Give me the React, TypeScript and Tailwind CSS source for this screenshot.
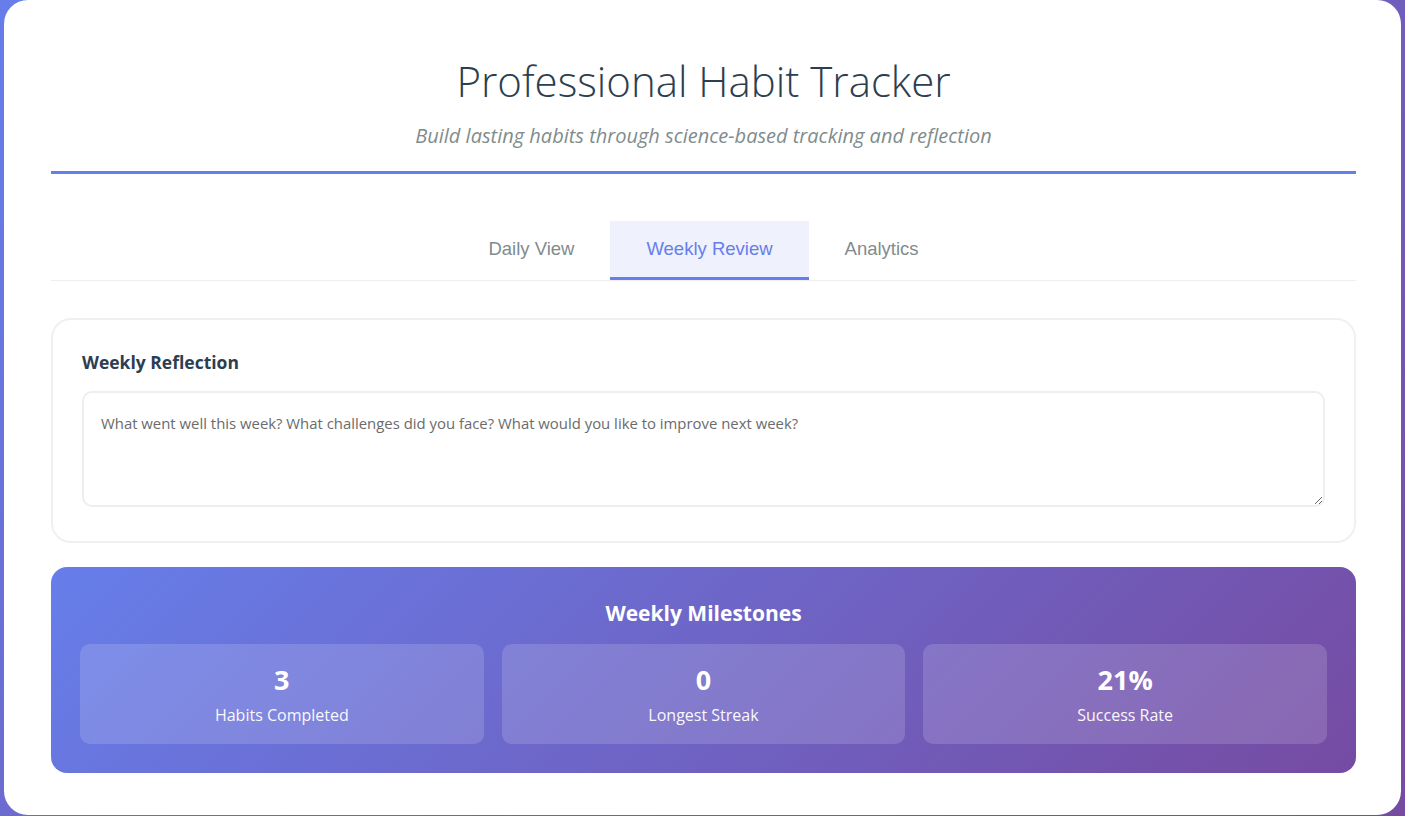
import React from "react";

const seg = { fontFamily: '"Open Sans", "Noto Sans", sans-serif' };

export default function App() {
  const stats = [
    { v: "3", l: "Habits Completed" },
    { v: "0", l: "Longest Streak" },
    { v: "21%", l: "Success Rate" },
  ];
  return (
    <div className="h-[816px] w-full overflow-hidden bg-[linear-gradient(135deg,#667eea_0%,#764ba2_100%)] px-[4px]">
      <div className="h-[815px] w-full rounded-[24px] bg-white pl-[47px] pr-[45px]" style={seg}>
        <header className="border-b-[3px] border-[#667eea] pt-[53px] pb-[22px] text-center">
          <h1 className="text-[42px] font-light leading-[56px] text-[#2c3e50]">Professional Habit Tracker</h1>
          <p className="mt-[13px] text-[20px] italic leading-[27px] text-[#7f8c8d]">
            Build lasting habits through science-based tracking and reflection
          </p>
        </header>
        <nav
          className="mt-[47px] flex justify-center border-b border-[#eeeeee]"
          style={{ fontFamily: '"Liberation Sans", Arial, sans-serif' }}
        >
          <button className="border-b-[3px] border-transparent px-[36px] pt-[17px] pb-[18px] text-[18.5px] leading-[21px] text-[#7f8c8d]">
            Daily View
          </button>
          <button className="border-b-[3px] border-[#667eea] bg-[#eff1fc] px-[36px] pt-[17px] pb-[18px] text-[18.5px] leading-[21px] text-[#667eea]">
            Weekly Review
          </button>
          <button className="border-b-[3px] border-transparent px-[36px] pt-[17px] pb-[18px] text-[18.5px] leading-[21px] text-[#7f8c8d]">
            Analytics
          </button>
        </nav>
        <section className="mt-[37px] rounded-[20px] border-2 border-[#f0f0f0] px-[29px] pt-[30px] pb-[34px]">
          <h3 className="text-[17.5px] font-bold leading-[24px] text-[#2c3e50]">Weekly Reflection</h3>
          <textarea
            className="mt-[17px] block h-[116px] w-full resize-y rounded-[10px] border-2 border-[#eeeeee] px-[17px] pt-[19px] pb-[16px] text-[14.9px] leading-[22px] text-[#555] outline-none placeholder:text-[#6b6b6b]"
            placeholder="What went well this week? What challenges did you face? What would you like to improve next week?"
            style={seg}
          />
        </section>
        <section className="mt-[24px] rounded-[16px] bg-[linear-gradient(135deg,#667eea_0%,#764ba2_100%)] px-[29px] pt-[32px] pb-[29px] text-white">
          <h3 className="text-center text-[21px] font-bold leading-[28px]">Weekly Milestones</h3>
          <div className="mt-[17px] grid grid-cols-3 gap-[18px]">
            {stats.map((s) => (
              <div key={s.l} className="flex h-[100px] flex-col items-center justify-center rounded-[10px] bg-white/15">
                <div className="text-[27px] font-bold leading-[34px]">{s.v}</div>
                <div className="mt-[7px] text-[16px] leading-[22px] opacity-95">{s.l}</div>
              </div>
            ))}
          </div>
        </section>
      </div>
    </div>
  );
}
